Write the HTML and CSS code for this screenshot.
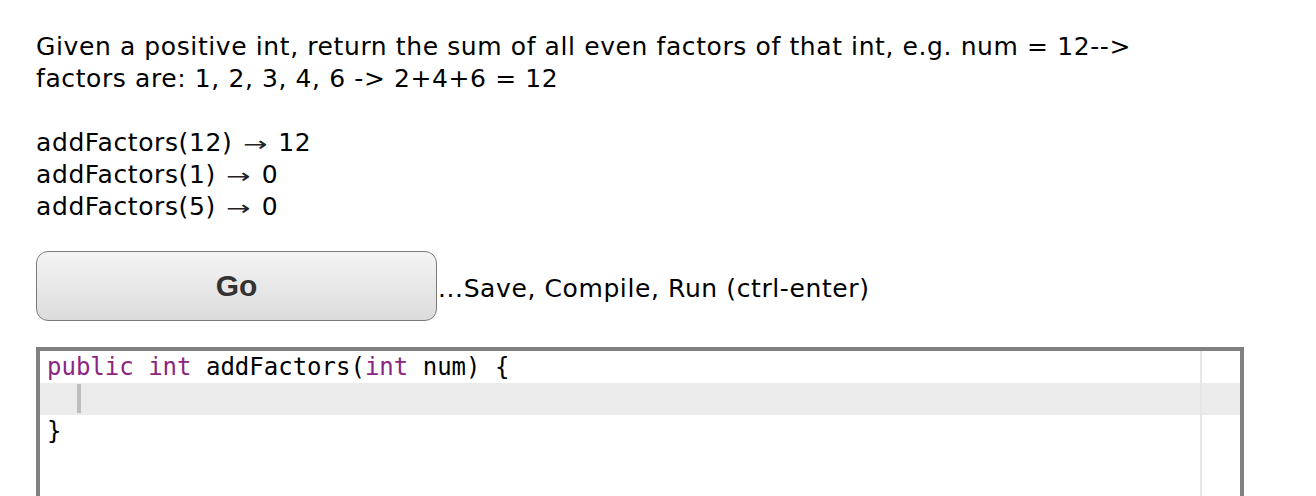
FILE: index.html
```html
<!DOCTYPE html>
<html>
<head>
<meta charset="utf-8">
<link rel="stylesheet" href="styles.css">
</head>
<body>
<div class="page">
  <p class="desc">Given a positive int, return the sum of all even factors of that int, e.g. num = 12--&gt;<br>factors are: 1, 2, 3, 4, 6 -&gt; 2+4+6 = 12</p>
  <div class="examples">
    <div>addFactors(12) <span class="arrow">→</span> 12</div>
    <div>addFactors(1) <span class="arrow">→</span> 0</div>
    <div>addFactors(5) <span class="arrow">→</span> 0</div>
  </div>
  <div class="actions">
    <button class="go">Go</button>
    <span class="hint">...Save, Compile, Run (ctrl-enter)</span>
  </div>
  <div class="editor">
    <div class="margin-line"></div>
    <div class="line"><span class="kw">public</span> <span class="kw">int</span> addFactors(<span class="kw">int</span> num) {</div>
    <div class="line active"><span class="cursor"></span></div>
    <div class="line">}</div>
    <div class="line"></div>
  </div>
</div>
</body>
</html>
```
FILE: styles.css
```css
html, body {
  margin: 0;
  padding: 0;
  background: #fff;
}
.page {
  padding: 31px 0 0 36px;
  font-family: "DejaVu Sans", Verdana, sans-serif;
  font-size: 25px;
  letter-spacing: 0.6px;
  line-height: 32px;
  color: #000;
}
.desc {
  margin: 0 0 32px 0;
}
.examples {
  margin: 0;
}
.examples > div {
  height: 32px;
}
.arrow {
  display: inline-block;
  font-size: 20px;
  line-height: 20px;
  letter-spacing: 0;
  color: #222;
  transform: scaleX(1.45);
  margin: 0 6px;
}
.actions {
  display: flex;
  align-items: center;
  margin-top: 28px;
}
.go {
  width: 401px;
  height: 70px;
  border: 1.5px solid #7a7a7a;
  border-radius: 12px;
  background: linear-gradient(#f4f4f4, #dcdcdc);
  font-family: "Liberation Sans", Arial, sans-serif;
  font-weight: bold;
  font-size: 30px;
  letter-spacing: 0;
  color: #333;
  padding: 0;
}
.hint {
  margin-left: 1px;
  padding-top: 6px;
}
.editor {
  position: relative;
  margin-top: 26px;
  width: 1200px;
  height: 150px;
  border: 4px solid #808080;
  border-bottom: none;
  font-family: "DejaVu Sans Mono", Menlo, monospace;
  font-size: 24px;
  letter-spacing: 0;
  line-height: 32px;
  overflow: hidden;
}
.line {
  height: 32px;
  padding-left: 7px;
  white-space: pre;
}
.line.active {
  background: #ebebeb;
}
.kw {
  color: #8a2583;
}
.cursor {
  display: inline-block;
  width: 4px;
  height: 29px;
  margin-left: 30px;
  margin-top: 1px;
  background: #bdbdbd;
  vertical-align: top;
}
.margin-line {
  position: absolute;
  top: 0;
  bottom: 0;
  left: 1160px;
  width: 2px;
  background: #e6e6e6;
}
```
